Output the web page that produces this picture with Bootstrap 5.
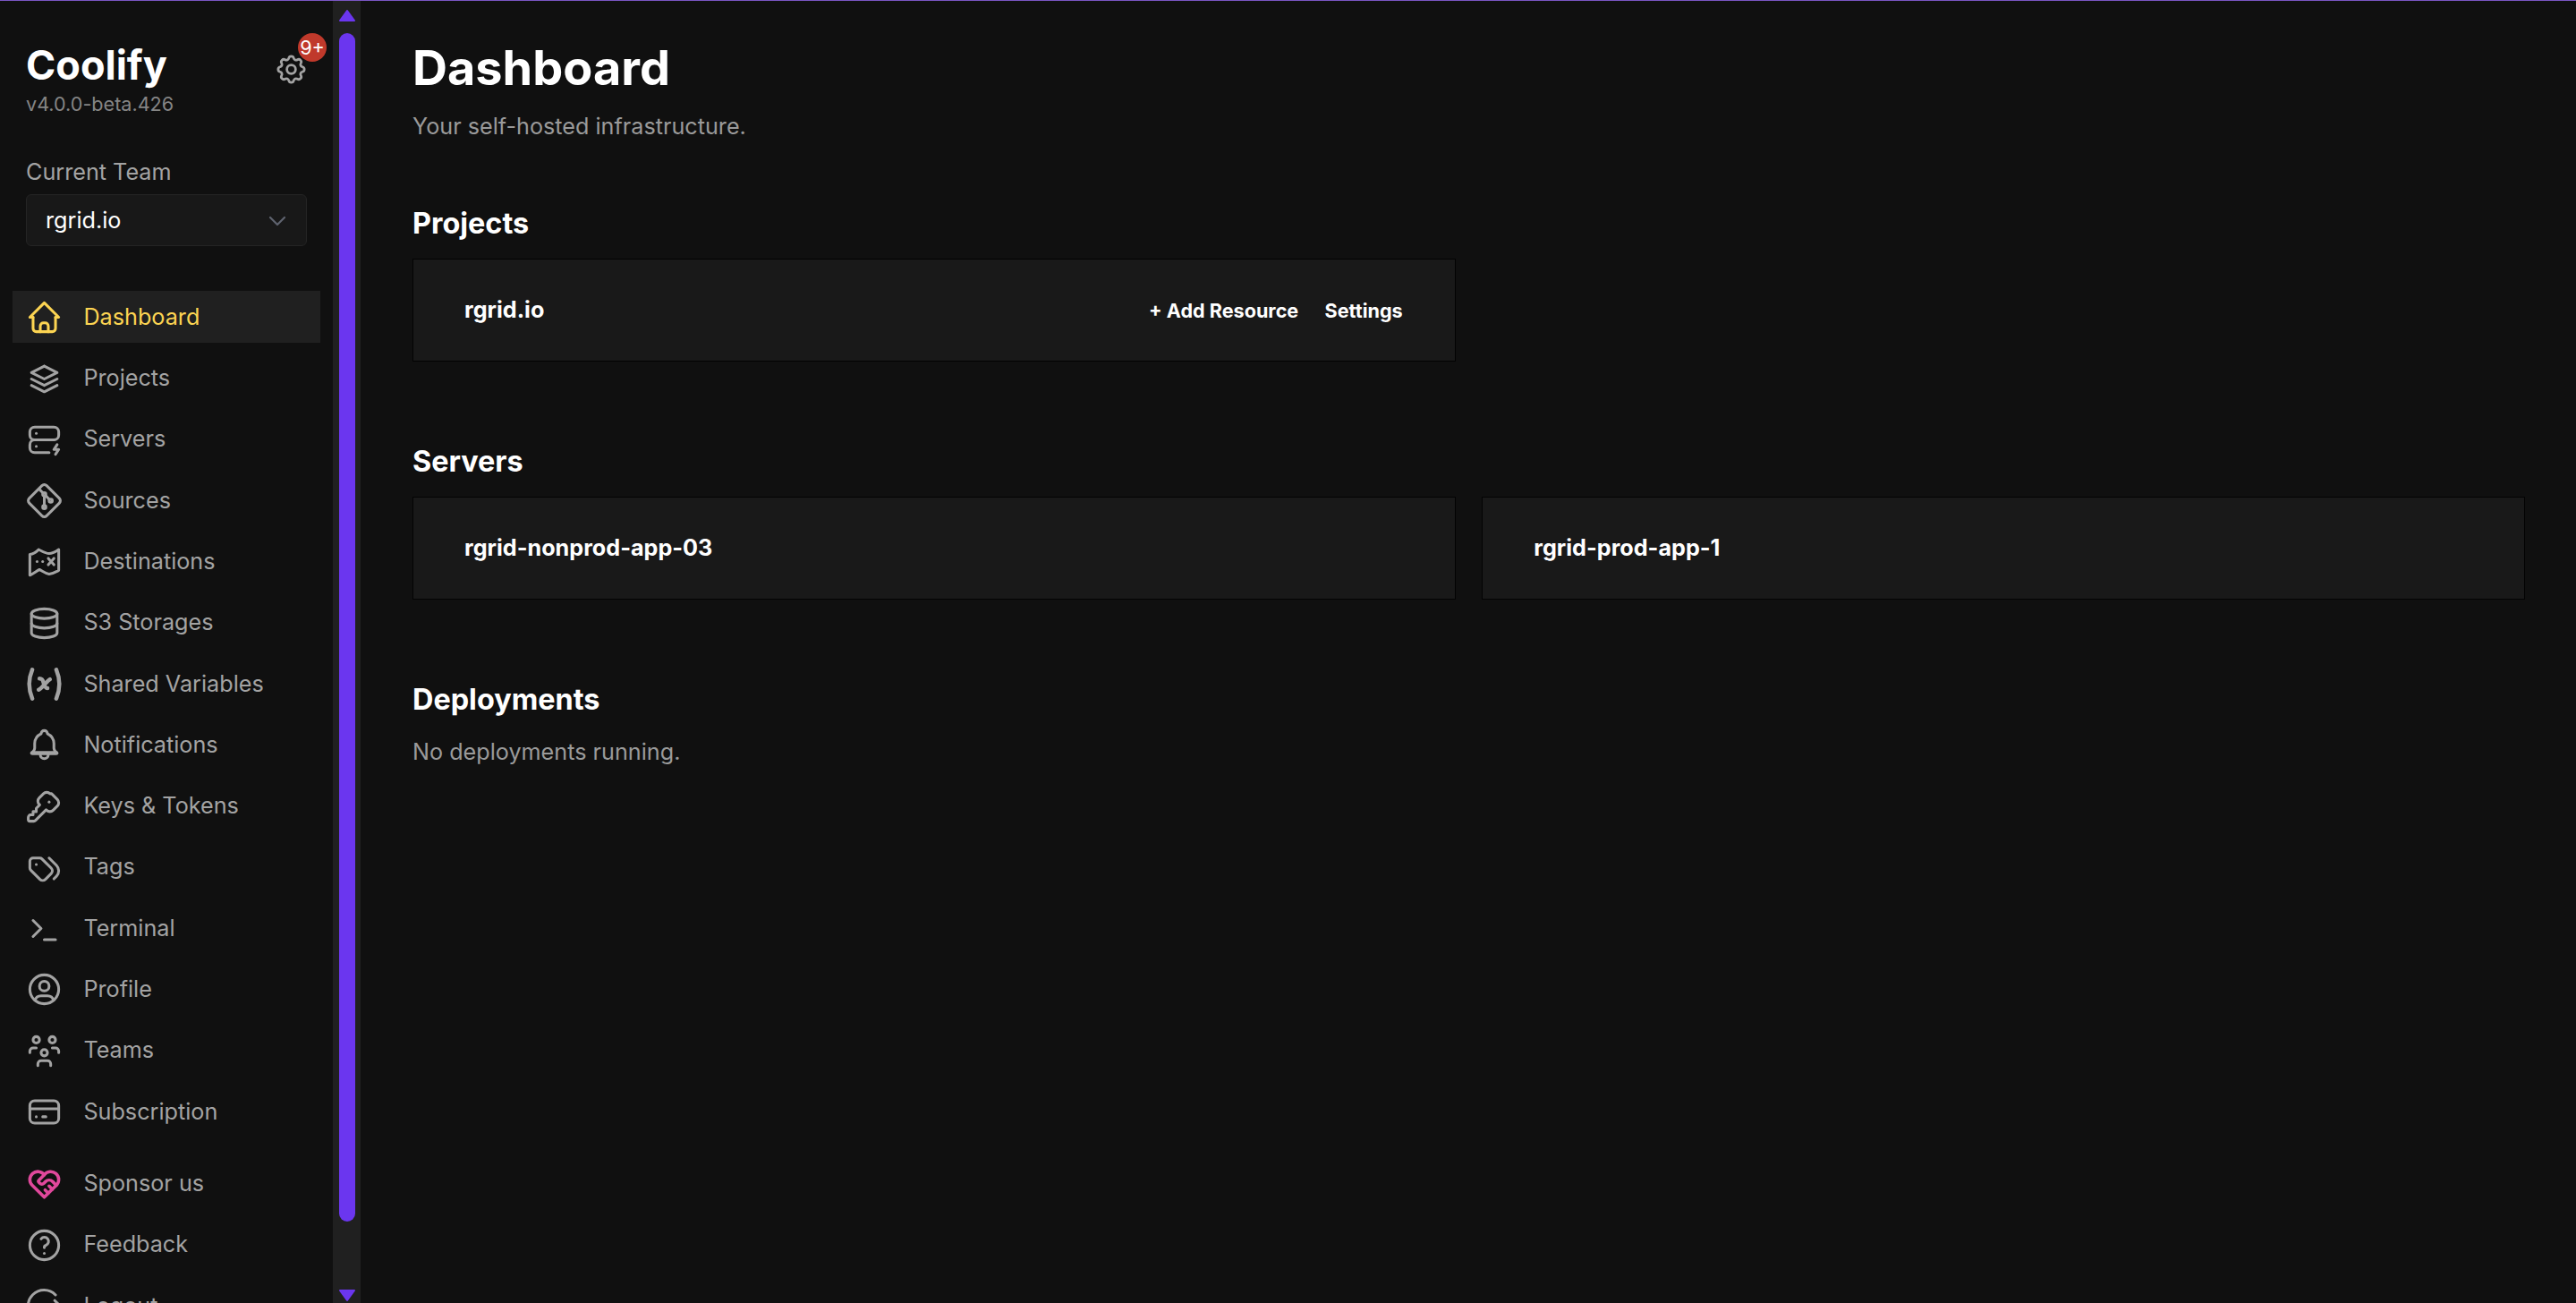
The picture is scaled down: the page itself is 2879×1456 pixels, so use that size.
<!doctype html>
<html lang="en" data-bs-theme="dark">
<head>
<meta charset="utf-8">
<title>Coolify</title>
<link rel="stylesheet" href="https://cdn.jsdelivr.net/npm/bootstrap@5.3.0/dist/css/bootstrap.min.css">
<style>
html,body{height:100%;overflow:hidden}
body{background:#101010;color:#fff;font-family:Inter,"Liberation Sans",sans-serif;border-top:1px solid #7a56c4}
.shell{height:1455px}
.side{width:372px;height:1455px;overflow:hidden;flex:none}
.sidehead{padding:45px 27.5px 0 29px}
.brand{font-size:45px;font-weight:700;line-height:54px}
.ver{font-size:21.6px;color:#858585;line-height:28px;margin-top:2px}
.gearwrap{width:39px;height:39px;color:#a3a3a3;margin-top:11.5px}
.gearwrap svg{width:39px;height:39px;display:block}
.count{top:-20.800px;right:-20.500px;width:32px;height:32px;border-radius:50%;background:#c0392b;color:#fff;font-size:21.6px;line-height:32px;text-align:center}
.teamwrap{padding:43.500px 29px 0 29px}
.teamlab{font-size:25.2px;color:#a3a3a3;line-height:36px;margin-bottom:7.500px}
.teamsel{height:58px;background:#181818;border:1px solid #242424;border-radius:6px;font-size:25.2px;color:#fff;padding:1px 20px 0 21px}
.teamsel svg{width:24px;height:24px;color:#5f636f}
.navlist{list-style:none;margin:50px 0 0;padding:0 14px}
.navrow{height:57.6px;margin-bottom:10.7px;display:flex;align-items:center;padding:2px 0 0 14.4px;gap:22px;color:#a3a3a3;font-size:25.2px;text-decoration:none}
.navrow svg{width:43px;height:43px;flex:none;fill:none;stroke:currentColor;stroke-width:1.7;stroke-linecap:round;stroke-linejoin:round}
.navrow.on{background:#202020;color:#fcd452}
.navrow svg .heavy{stroke-width:2.5}
.sepgap{margin-top:23px}
.navrow svg.pink{color:#e0489b;stroke-width:2}
.rail{width:31px;height:1455px;background:#202020;flex:none;padding:0 6.5px}
.rail svg{display:block;width:18px;height:14px;fill:#6b36ef;stroke:#6b36ef;stroke-width:2;stroke-linejoin:round}
.rail .up{margin-top:9px}
.rail .dn{margin-top:auto;margin-bottom:1px}
.rail .thumb{height:1328px;margin-top:13px;border-radius:9px;background:#6b36ef}
.mainarea{padding:0 57px 0 58px;min-width:0}
.pagetitle{font-size:54px;font-weight:700;line-height:72px;margin:39px 0 0}
.sub{font-size:25.2px;color:#9a9a9a;line-height:36px}
.sub1{margin-top:11px}
.sub2{margin-top:15px}
.sect{font-size:32.4px;font-weight:700;line-height:50px;margin:87px 0 14px}
.sect.first{margin-top:66px}
.sect.last{margin-bottom:0}
.tile{height:115px;background:#191919;border:1px solid #020202;padding:1px 57px 0;font-size:25.2px;font-weight:700}
.acts{font-size:21.6px;font-weight:700;gap:29.400px;margin-right:1px}
.tilegrid{display:grid;grid-template-columns:1fr 1fr;gap:29.600px}
</style>
</head>
<body>
<div class="shell d-flex">
  <aside class="side">
    <div class="sidehead d-flex justify-content-between align-items-start">
      <div>
        <div class="brand">Coolify</div>
        <div class="ver">v4.0.0-beta.426</div>
      </div>
      <div class="gearwrap position-relative">
        <svg viewBox="0 0 24 24" fill="none" stroke="currentColor" stroke-width="1.7" stroke-linecap="round" stroke-linejoin="round"><path d="M10.325 4.317c.426-1.756 2.924-1.756 3.35 0a1.724 1.724 0 0 0 2.573 1.066c1.543-.94 3.31.826 2.37 2.37a1.724 1.724 0 0 0 1.065 2.572c1.756.426 1.756 2.924 0 3.35a1.724 1.724 0 0 0-1.066 2.573c.94 1.543-.826 3.31-2.37 2.37a1.724 1.724 0 0 0-2.572 1.065c-.426 1.756-2.924 1.756-3.35 0a1.724 1.724 0 0 0-2.573-1.066c-1.543.94-3.31-.826-2.37-2.37a1.724 1.724 0 0 0-1.065-2.572c-1.756-.426-1.756-2.924 0-3.35a1.724 1.724 0 0 0 1.066-2.573c-.94-1.543.826-3.31 2.37-2.37 1 .608 2.296.07 2.572-1.065z"/><circle cx="12" cy="12" r="3"/></svg>
        <span class="count position-absolute">9+</span>
      </div>
    </div>
    <div class="teamwrap">
      <div class="teamlab">Current Team</div>
      <div class="teamsel d-flex align-items-center justify-content-between">
        <span>rgrid.io</span>
        <svg viewBox="0 0 24 24" fill="none" stroke="currentColor" stroke-width="2.2" stroke-linecap="round" stroke-linejoin="round"><path d="M4 8l8 8 8-8"/></svg>
      </div>
    </div>
    <ul class="navlist">
      <li><a class="navrow on" href="#"><svg viewBox="0 0 24 24"><path d="M5 12H3l9-9 9 9h-2"/><path d="M5 12v7a2 2 0 0 0 2 2h10a2 2 0 0 0 2-2v-7"/><path d="M9.5 21v-3.5a2 2 0 0 1 2-2h1a2 2 0 0 1 2 2V21"/></svg>Dashboard</a></li>
      <li><a class="navrow" href="#"><svg viewBox="0 0 24 24"><path d="M12 4 4 8l8 4 8-4-8-4"/><path d="m4 12 8 4 8-4"/><path d="m4 16 8 4 8-4"/></svg>Projects</a></li>
      <li><a class="navrow" href="#"><svg viewBox="0 0 24 24"><path d="M3 7a3 3 0 0 1 3-3h12a3 3 0 0 1 3 3v2a3 3 0 0 1-3 3H6a3 3 0 0 1-3-3z"/><path d="M15 20H6a3 3 0 0 1-3-3v-2a3 3 0 0 1 3-3h12"/><path d="M7 8v.01"/><path d="M7 16v.01"/><path d="m20 15-2 3h3l-2 3"/></svg>Servers</a></li>
      <li><a class="navrow" href="#"><svg viewBox="0 0 24 24"><circle cx="16" cy="12" r="1"/><circle cx="12" cy="8" r="1"/><circle cx="12" cy="16" r="1"/><path d="M12 15V9"/><path d="m15 11-2-2"/><path d="M11 7 9.1 5.1"/><path d="m13.446 2.6 7.955 7.954a2.045 2.045 0 0 1 0 2.892l-7.955 7.955a2.045 2.045 0 0 1-2.892 0l-7.955-7.955a2.045 2.045 0 0 1 0-2.892l7.955-7.955a2.045 2.045 0 0 1 2.892 0z"/></svg>Sources</a></li>
      <li><a class="navrow" href="#"><svg viewBox="0 0 24 24"><path d="M3 7.500c2.500-.3 4-1.500 5.500-3 2 1 4.500 2.500 6.500 2.500 2.500 0 4.500-1.500 6-2.500v13c-2 1-3.500 2-6 2.300-2.200-.3-4-1.800-6-2.800-2 1-3.500 2.500-6 3.500z"/><path d="M7.500 12h.01"/><path d="M11 12h.01"/><path d="m14.500 10 3.500 4"/><path d="m18 10-3.500 4"/></svg>Destinations</a></li>
      <li><a class="navrow" href="#"><svg viewBox="0 0 24 24"><ellipse cx="12" cy="6" rx="8" ry="3"/><path d="M4 6v6a8 3 0 0 0 16 0V6"/><path d="M4 12v6a8 3 0 0 0 16 0v-6"/></svg>S3 Storages</a></li>
      <li><a class="navrow" href="#"><svg viewBox="0 0 24 24"><path class="heavy" d="M4.500 3c-2.500 6-2.500 12 0 18m15-18c2.500 6 2.500 12 0 18"/><path class="heavy" d="M9 8.500c1.500 0 2 .5 2.500 2.500s1 3.500 2.500 3.500"/><path class="heavy" d="M8.500 15.500c1.800-.4 4.500-5 7-6.500"/></svg>Shared Variables</a></li>
      <li><a class="navrow" href="#"><svg viewBox="0 0 24 24"><path d="M10 5a2 2 0 1 1 4 0 7 7 0 0 1 4 6v3a4 4 0 0 0 2 3H4a4 4 0 0 0 2-3v-3a7 7 0 0 1 4-6"/><path class="heavy" d="M4.500 17h15"/><path d="M9.500 17v1a2.500 2.500 0 0 0 5 0v-1"/></svg>Notifications</a></li>
      <li><a class="navrow" href="#"><svg viewBox="0 0 24 24"><path d="m16.555 3.843 3.602 3.602a2.877 2.877 0 0 1 0 4.069l-2.643 2.643a2.877 2.877 0 0 1-4.069 0l-.301-.301-6.558 6.558a2 2 0 0 1-1.239.578l-.175.008H3.000a1 1 0 0 1-.993-.883L2 20.000v-1.172a2 2 0 0 1 .467-1.284l.119-.13.414-.414h2v-2h2v-2l2.144-2.144-.301-.301a2.877 2.877 0 0 1 0-4.069l2.643-2.643a2.877 2.877 0 0 1 4.069 0z"/><path d="M15 9h.01"/></svg>Keys &amp; Tokens</a></li>
      <li><a class="navrow" href="#"><svg viewBox="0 0 24 24"><path d="M3 8v4.172a2 2 0 0 0 .586 1.414l5.710 5.710a2.410 2.410 0 0 0 3.408 0l3.592-3.592a2.410 2.410 0 0 0 0-3.408l-5.710-5.710A2 2 0 0 0 9.172 6H5a2 2 0 0 0-2 2z"/><path d="m18 19 1.592-1.592a4.820 4.820 0 0 0 0-6.816L15 6"/><path d="M7 10h-.01"/></svg>Tags</a></li>
      <li><a class="navrow" href="#"><svg viewBox="0 0 24 24"><path d="m5 7 5 5-5 5"/><path d="M12 19h7"/></svg>Terminal</a></li>
      <li><a class="navrow" href="#"><svg viewBox="0 0 24 24"><circle cx="12" cy="12" r="9"/><circle cx="12" cy="10" r="3"/><path d="M6.168 18.849A4 4 0 0 1 10 16h4a4 4 0 0 1 3.834 2.855"/></svg>Profile</a></li>
      <li><a class="navrow" href="#"><svg viewBox="0 0 24 24"><path d="M10 13a2 2 0 1 0 4 0 2 2 0 0 0-4 0"/><path d="M8 21v-1a2 2 0 0 1 2-2h4a2 2 0 0 1 2 2v1"/><path d="M15 5a2 2 0 1 0 4 0 2 2 0 0 0-4 0"/><path d="M17 10h2a2 2 0 0 1 2 2v1"/><path d="M5 5a2 2 0 1 0 4 0 2 2 0 0 0-4 0"/><path d="M3 13v-1a2 2 0 0 1 2-2h2"/></svg>Teams</a></li>
      <li><a class="navrow" href="#"><svg viewBox="0 0 24 24"><path d="M3 8a3 3 0 0 1 3-3h12a3 3 0 0 1 3 3v8a3 3 0 0 1-3 3H6a3 3 0 0 1-3-3z"/><path d="M3 10h18"/><path d="M7 15h.01"/><path d="M11 15h2"/></svg>Subscription</a></li>
      <li class="sepgap"><a class="navrow" href="#"><svg class="pink" viewBox="0 0 24 24"><path d="M19.500 12.572 12 20l-7.500-7.428a5 5 0 1 1 7.500-6.566 5 5 0 1 1 7.500 6.572"/><path d="M12 6 8.707 9.293a1 1 0 0 0 0 1.414l.543.543c.690.690 1.810.690 2.500 0l1-1a3.182 3.182 0 0 1 4.500 0l2.250 2.250"/><path d="m12.500 15.500 2 2"/><path d="m15 13 2 2"/></svg>Sponsor us</a></li>
      <li><a class="navrow" href="#"><svg viewBox="0 0 24 24"><circle cx="12" cy="12" r="9"/><path d="M12 17v.01"/><path d="M12 13.500a1.500 1.500 0 0 1 1-1.500 2.600 2.600 0 1 0-3-4"/></svg>Feedback</a></li>
      <li><a class="navrow" href="#"><svg viewBox="0 0 24 24"><path d="M19 5a10 10 0 1 0 0 14"/><path d="M11 12h10.500"/><path d="M18.500 8.500 22 12l-3.500 3.500"/></svg>Logout</a></li>
    </ul>
  </aside>
  <div class="rail d-flex flex-column">
    <svg class="up" viewBox="0 0 18 14"><path d="M9 2 17 13H1z"/></svg>
    <div class="thumb"></div>
    <svg class="dn" viewBox="0 0 18 14"><path d="M9 12 17 1H1z"/></svg>
  </div>
  <main class="mainarea flex-grow-1">
    <h1 class="pagetitle">Dashboard</h1>
    <div class="sub sub1">Your self-hosted infrastructure.</div>
    <h2 class="sect first">Projects</h2>
    <div class="tilegrid">
      <div class="tile d-flex align-items-center justify-content-between">
        <span>rgrid.io</span>
        <div class="acts d-flex"><span>+ Add Resource</span><span>Settings</span></div>
      </div>
    </div>
    <h2 class="sect">Servers</h2>
    <div class="tilegrid">
      <div class="tile d-flex align-items-center">rgrid-nonprod-app-03</div>
      <div class="tile d-flex align-items-center">rgrid-prod-app-1</div>
    </div>
    <h2 class="sect last">Deployments</h2>
    <div class="sub sub2">No deployments running.</div>
  </main>
</div>
</body>
</html>
